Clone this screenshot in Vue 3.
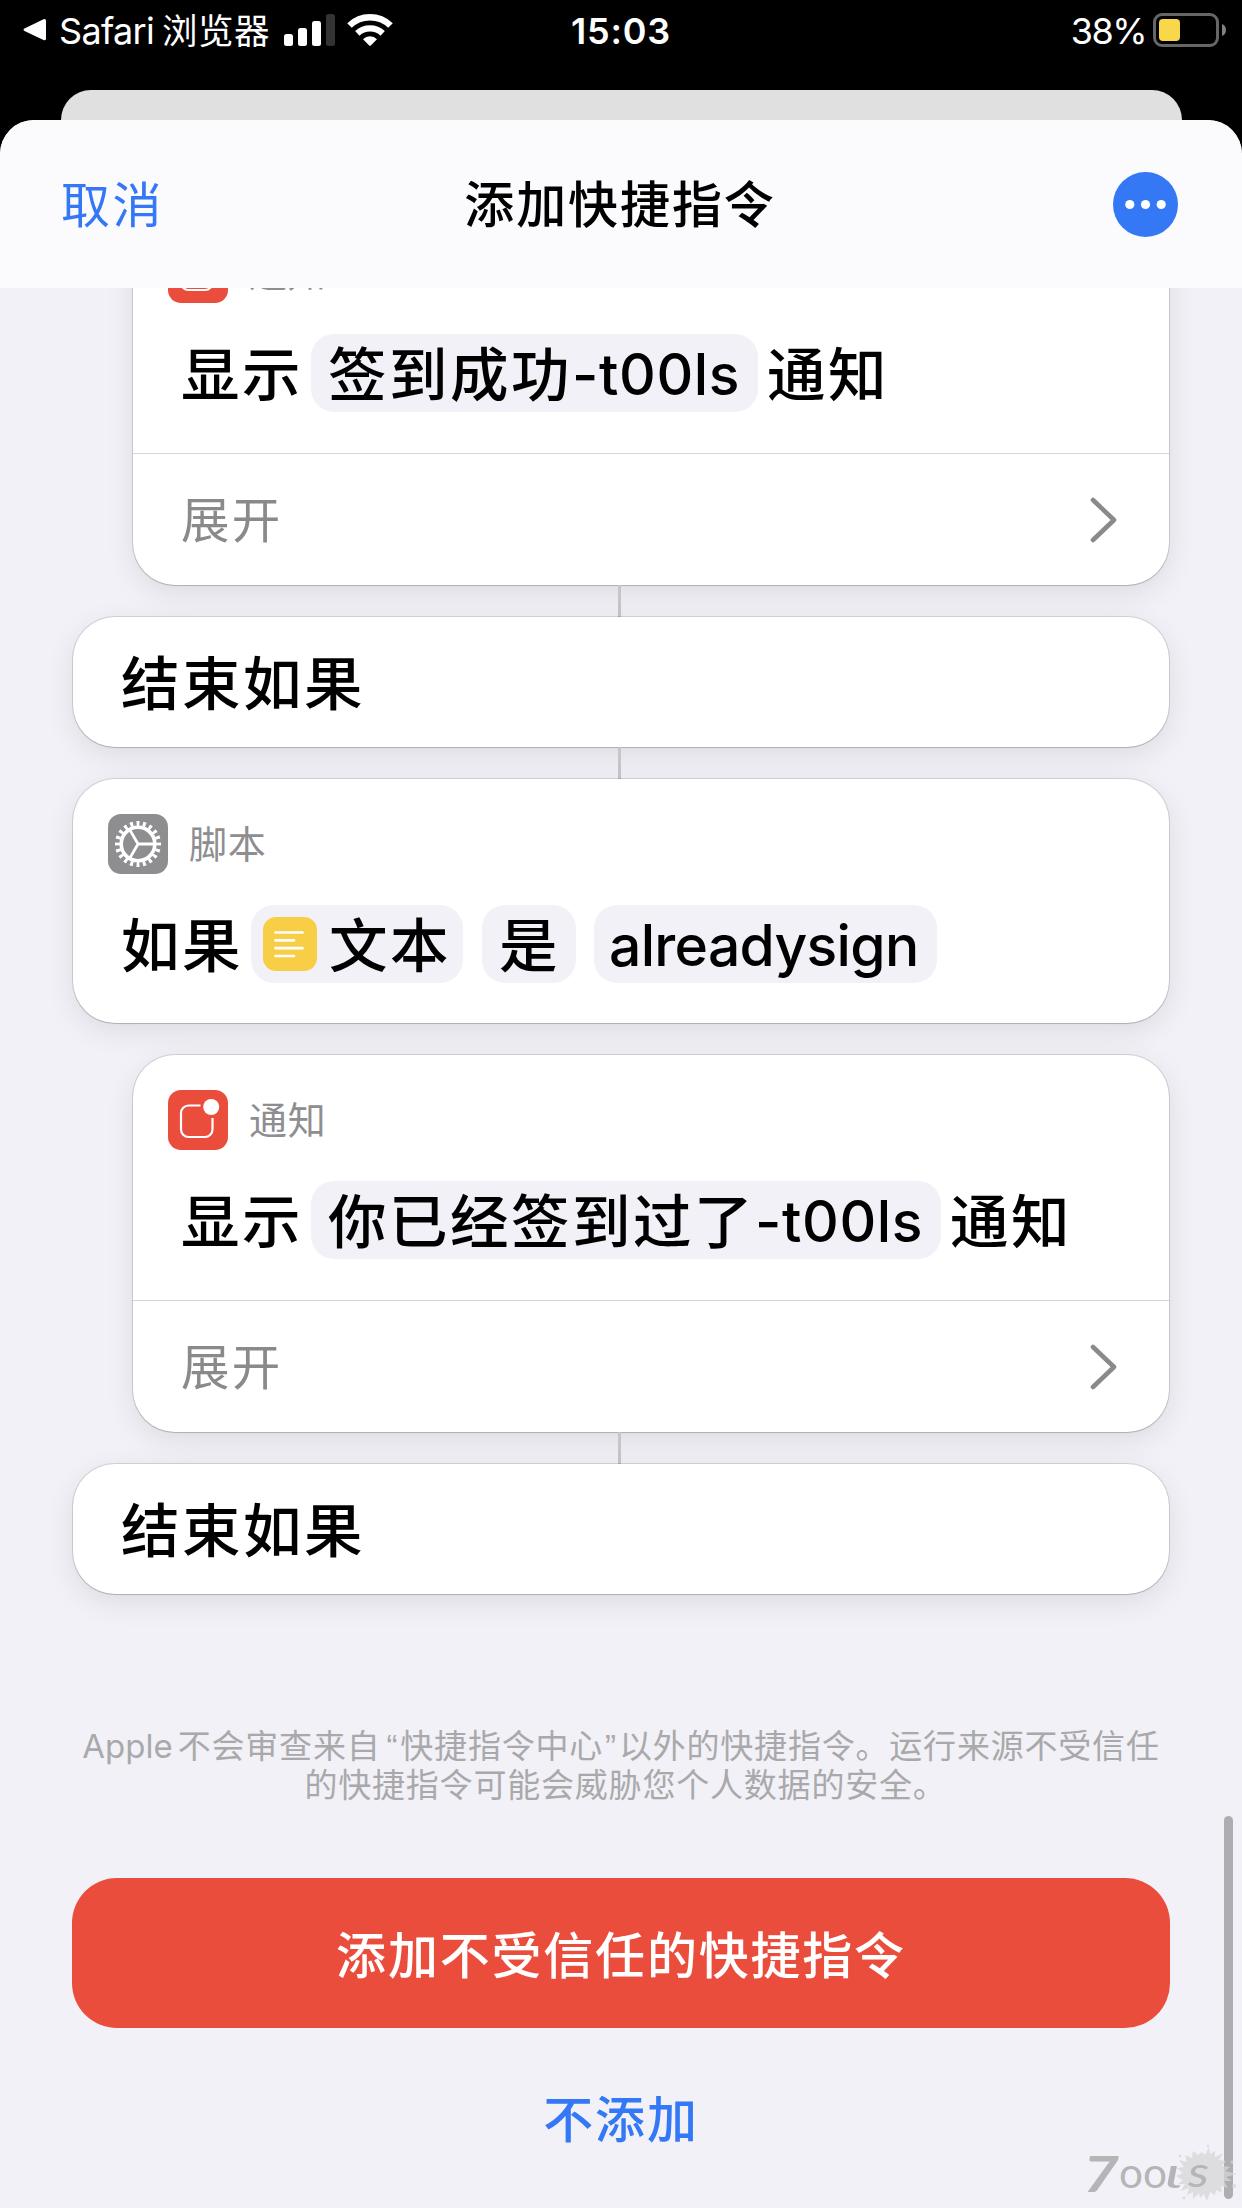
<script setup>
const actions = [
  { id: 1, kind: 'notify', indent: true, linked: true, message: '签到成功', suffix: '-t00ls' },
  { id: 2, kind: 'end', indent: false, linked: true },
  { id: 3, kind: 'if', indent: false, linked: false },
  { id: 4, kind: 'notify', indent: true, linked: true, message: '你已经签到过了', suffix: '-t00ls' },
  { id: 5, kind: 'end', indent: false, linked: false },
]
</script>

<template>
  <div class="screen">
    <header class="status">
      <div class="status__left">
        <svg class="status__back" width="24" height="24" viewBox="0 0 24 24">
          <path d="M1.5 10.6 20.5 1.3Q23 .5 23 3V20.500Q23 23 20.500 22L1.500 13Q-.5 11.800 1.500 10.600Z" fill="#fff" />
        </svg>
        <span class="status__app">Safari</span>
        <span class="status__app-cn">浏览器</span>
        <svg class="status__signal" width="52" height="33" viewBox="0 0 52 33">
          <rect x="0" y="20" width="9" height="12" rx="2.500" fill="#fff" />
          <rect x="14" y="14" width="9" height="18" rx="2.500" fill="#fff" />
          <rect x="28" y="7" width="9" height="25" rx="2.500" fill="#fff" />
          <rect x="42" y="0" width="9" height="32" rx="2.500" fill="#333" />
        </svg>
        <svg class="status__wifi" width="46" height="34" viewBox="0 0 46 34">
          <path d="M2.500 12.500A29.500 29.500 0 0 1 43.500 12.500" fill="none" stroke="#fff" stroke-width="6.500" />
          <path d="M10.300 20.400A18.500 18.500 0 0 1 35.700 20.400" fill="none" stroke="#fff" stroke-width="6.300" />
          <path d="M16 26.200A10 10 0 0 1 30 26.200L23.800 32.500Q23 33.200 22.200 32.500Z" fill="#fff" />
        </svg>
      </div>
      <span class="status__time">15:03</span>
      <div class="status__right">
        <span class="status__percent">38%</span>
        <svg width="74" height="34" viewBox="0 0 74 34">
          <rect x="1.500" y="1.500" width="63" height="31" rx="7.500" fill="none" stroke="#666" stroke-width="3" />
          <rect x="6" y="6" width="21" height="22" rx="4" fill="#f8d74a" />
          <path d="M69 11Q73 12.500 73 17T69 23Z" fill="#808080" />
        </svg>
      </div>
    </header>

    <div class="back-sheet"></div>

    <main class="sheet">
      <nav class="nav">
        <span class="nav__cancel">取消</span>
        <h1 class="nav__title">添加快捷指令</h1>
        <svg class="nav__more" width="65" height="65" viewBox="0 0 65 65">
          <circle cx="32.500" cy="32.500" r="32.500" fill="#3478f6" />
          <circle cx="16.800" cy="32.500" r="4.600" fill="#fff" />
          <circle cx="32.500" cy="32.500" r="4.600" fill="#fff" />
          <circle cx="48.200" cy="32.500" r="4.600" fill="#fff" />
        </svg>
      </nav>

      <div class="scroll">
        <div class="actions">
          <section
            v-for="action in actions"
            :key="action.id"
            class="card"
            :class="{ 'card--indent': action.indent, 'card--linked': action.linked }"
          >
            <template v-if="action.kind === 'notify'">
              <div class="card__head">
                <svg width="60" height="60" viewBox="0 0 60 60">
                  <rect width="60" height="60" rx="13" fill="#eb4d3d" />
                  <path
                    d="M32.500 15.500H20.500a7.500 7.500 0 0 0-7.500 7.500V39.500a7.500 7.500 0 0 0 7.500 7.500H37a7.500 7.500 0 0 0 7.500-7.500V28"
                    fill="none"
                    stroke="#fff"
                    stroke-width="2.200"
                  />
                  <circle cx="43.200" cy="17" r="8" fill="#fff" />
                </svg>
                <span class="card__label">通知</span>
              </div>
              <div class="card__line">
                <span>显示</span>
                <span class="chip chip--message">
                  <span>{{ action.message }}</span>
                  <span class="chip__latin">{{ action.suffix }}</span>
                </span>
                <span>通知</span>
              </div>
              <div class="card__expand">
                <span class="card__expand-text">展开</span>
                <svg width="28" height="46" viewBox="0 0 28 46">
                  <path
                    d="M3 3 24 23 3 43"
                    fill="none"
                    stroke="#8a8a8d"
                    stroke-width="4.600"
                    stroke-linecap="round"
                    stroke-linejoin="round"
                  />
                </svg>
              </div>
            </template>

            <template v-else-if="action.kind === 'if'">
              <div class="card__head">
                <svg width="60" height="60" viewBox="0 0 60 60">
                  <rect width="60" height="60" rx="13" fill="#8e8e91" />
                  <g fill="none" stroke="#fff">
                    <circle cx="30" cy="30" r="16.800" stroke-width="3.600" />
                    <circle cx="30" cy="30" r="20.500" stroke-width="5" pathLength="200" stroke-dasharray="4.600 5.400" stroke-dashoffset="2.300" />
                    <path d="M30 30H46M30 30 22 16.100M30 30 22 43.900" stroke-width="2.800" />
                  </g>
                </svg>
                <span class="card__label">脚本</span>
              </div>
              <div class="card__line card__line--if">
                <span>如果</span>
                <span class="chip chip--variable">
                  <svg width="54" height="54" viewBox="0 0 54 54">
                    <rect width="54" height="54" rx="13" fill="#f8ce46" />
                    <path
                      d="M12.500 15.500H39.500M12.500 23.300H31M12.500 31.200H39.500M12.500 39H31"
                      stroke="#fff"
                      stroke-width="2.700"
                      stroke-linecap="round"
                    />
                  </svg>
                  <span>文本</span>
                </span>
                <span class="chip chip--operator"><span>是</span></span>
                <span class="chip chip--value"><span>alreadysign</span></span>
              </div>
            </template>

            <div v-else class="card__end">结束如果</div>
          </section>
        </div>

        <p class="notice">
          <span class="notice__latin">Apple</span>不会审查来自<span class="notice__quote notice__quote--open">“</span>快捷指令中心<span class="notice__quote">”</span>以外的快捷指令。运行来源不受信任<br /><span class="notice__last">的快捷指令可能会威胁您个人数据的安全。</span>
        </p>

        <button type="button" class="add">添加不受信任的快捷指令</button>
        <button type="button" class="skip">不添加</button>
      </div>

      <div class="scrollbar"></div>

      <svg class="watermark" width="170" height="70" viewBox="0 0 170 70">
        <g fill="#d5d5d8" fill-opacity="0.75">
          <path
            d="M130 14 133 17 137 9 138 16 143 13 143 19 151 15 147 22 154 23 150 28 158 29 153 33 165 36 154 39 160 43 152 43 156 50 149 48 150 55 144 52 143 57 138 54 135 63 132 56 128 60 127 55 121 61 121 54 115 57 117 50 109 53 113 46 106 46 111 42 104 38 111 35 105 30 112 29 107 22 115 24 113 17 120 20 121 13 126 17Z"
          />
          <circle cx="108" cy="18" r="1.500" />
          <circle cx="160" cy="24" r="1.500" />
          <circle cx="162" cy="48" r="2" />
          <circle cx="112" cy="60" r="1.500" />
          <circle cx="136" cy="8" r="1.200" />
        </g>
        <g fill="#b5b5b8">
          <text class="watermark__seven" x="11" y="54" textLength="36" lengthAdjust="spacingAndGlyphs">7</text>
          <text class="watermark__letters" x="47" y="50" textLength="48" lengthAdjust="spacingAndGlyphs">oo</text>
          <text class="watermark__letters watermark__letters--slanted" x="93" y="50" textLength="17" lengthAdjust="spacingAndGlyphs">ι</text>
          <text class="watermark__letters watermark__letters--slanted" x="116" y="49" textLength="21" lengthAdjust="spacingAndGlyphs">s</text>
        </g>
      </svg>
    </main>
  </div>
</template>

<style>
body {
  margin: 0;
  background: #000;
}
</style>

<style scoped>
.screen {
  position: relative;
  display: flex;
  flex-direction: column;
  width: 1242px;
  height: 2208px;
  overflow: hidden;
  background: #000;
  font-family: Inter, 'Noto Sans CJK SC', sans-serif;
}

.status {
  display: grid;
  grid-template-columns: 1fr auto 1fr;
  align-items: start;
  height: 90px;
  color: #fff;
  font-size: 36px;
  line-height: 60px;
}

.status__left,
.status__right {
  display: flex;
  height: 60px;
  align-items: center;
}

.status__left {
  padding-left: 23px;
}

.status__app {
  width: 103px;
  margin-left: 12px;
  padding-top: 2px;
  letter-spacing: -0.700px;
}

.status__app-cn {
  width: 120px;
  padding-top: 4px;
  font-size: 35.500px;
  letter-spacing: 0.500px;
}

.status__signal {
  margin-left: 2px;
}

.status__wifi {
  margin-left: 11px;
}

.status__time {
  padding-top: 1px;
  font-weight: 600;
  letter-spacing: 0.800px;
}

.status__right {
  justify-content: flex-end;
  gap: 7px;
  padding-right: 15px;
}

.status__percent {
  padding-top: 2px;
  letter-spacing: -1.500px;
}

.back-sheet {
  flex: none;
  height: 30px;
  margin: 0 60px 0 61px;
  background: #e0e0e0;
  border-radius: 30px 30px 0 0;
}

.sheet {
  position: relative;
  display: flex;
  flex: 1;
  flex-direction: column;
  min-height: 0;
  overflow: hidden;
  background: #f2f1f7;
  border-radius: 34px 34px 0 0;
}

.nav {
  display: grid;
  flex: none;
  grid-template-columns: 1fr auto 1fr;
  align-items: center;
  height: 168px;
  padding: 0 64px 0 60px;
  background: #fbfbfd;
  font-size: 50px;
}

.nav__cancel {
  padding: 0 0 6px 1px;
  font-size: 49px;
  color: #3478f6;
  letter-spacing: 2.500px;
}

.nav__title {
  margin: 0;
  padding: 0 0 6px 2px;
  font-size: 50px;
  font-weight: 500;
  letter-spacing: 1.900px;
}

.nav__more {
  justify-self: end;
}

.scroll {
  display: flex;
  flex: 1;
  flex-direction: column;
  min-height: 0;
  padding: 0 73px;
  overflow: hidden;
}

.actions {
  display: flex;
  flex-direction: column;
  gap: 32px;
  margin-top: -80px;
}

.card {
  position: relative;
  background: #fff;
  border-radius: 42px;
  box-shadow:
    0 0 0 1px rgba(0, 0, 0, 0.12),
    0 1px 1px rgba(0, 0, 0, 0.12),
    0 8px 30px rgba(0, 0, 0, 0.09);
}

.card--indent {
  margin-left: 60px;
}

/* connector down to the next action */
.card--linked::after {
  position: absolute;
  top: 100%;
  right: 548px;
  width: 3px;
  height: 32px;
  content: '';
  background: #c6c6c8;
}

.card__head {
  display: flex;
  gap: 21px;
  align-items: center;
  padding: 35px 35px 0;
}

.card__label {
  font-size: 38px;
  line-height: 60px;
  color: #8e8e91;
  letter-spacing: 0.700px;
}

.card__line {
  display: flex;
  align-items: center;
  height: 78px;
  padding: 31px 0 41px 48px;
  font-size: 58.500px;
  font-weight: 500;
  line-height: 78px;
  letter-spacing: 2.500px;
  white-space: nowrap;
}

.card__line--if {
  padding-bottom: 40px;
}

.card__line span:not(.chip) {
  padding-top: 4px;
}

.chip {
  display: flex;
  align-items: center;
  box-sizing: border-box;
  height: 78px;
  background: #f2f1f7;
  border-radius: 23px;
}

.chip--message {
  margin: 0 9px 0 8px;
  padding: 0 18px 0 17px;
}

.chip__latin {
  font-size: 57px;
  letter-spacing: 0.600px;
}

.chip--variable {
  gap: 12px;
  width: 212px;
  margin-left: 8px;
  padding-left: 12px;
}

.chip--operator {
  width: 94px;
  margin-left: 19px;
  padding-left: 17px;
}

.chip--value {
  width: 343px;
  margin-left: 18px;
  padding-left: 15px;
  font-size: 57px;
  letter-spacing: -0.700px;
}

.card__expand {
  display: flex;
  align-items: center;
  justify-content: space-between;
  height: 131px;
  padding: 0 51px 0 48px;
  font-size: 48.500px;
  color: #8a8a8d;
  letter-spacing: 2.300px;
  border-top: 1px solid #d6d6d8;
}

.card__expand-text {
  padding-bottom: 5px;
}

.card__end {
  height: 130px;
  padding-left: 48px;
  font-size: 58.500px;
  font-weight: 500;
  line-height: 134px;
  letter-spacing: 2.500px;
}

.notice {
  margin: 133px -20px 0;
  font-size: 33px;
  line-height: 39px;
  color: #a9a9ab;
  text-align: center;
  letter-spacing: 0.800px;
  white-space: nowrap;
}

.notice__latin {
  margin-right: 5px;
  letter-spacing: 0;
}

.notice__quote {
  margin: 0 2px;
  font-family: 'Liberation Sans', sans-serif;
}

.notice__quote--open {
  margin-left: 6px;
}

.notice__last {
  padding-left: 9px;
}

.add {
  height: 150px;
  margin: 73px -1px 0;
  padding: 0 0 3px;
  font: inherit;
  font-size: 50px;
  font-weight: 500;
  color: #fff;
  letter-spacing: 1.800px;
  background: #eb4d3d;
  border: 0;
  border-radius: 45px;
}

.skip {
  align-self: center;
  margin-top: 55px;
  padding: 0;
  font: inherit;
  font-size: 50px;
  font-weight: 500;
  line-height: 74px;
  color: #3478f6;
  letter-spacing: 1.800px;
  background: none;
  border: 0;
}

.scrollbar {
  position: absolute;
  right: 9px;
  bottom: 9px;
  width: 9px;
  height: 383px;
  background: #aeaeb2;
  border-radius: 5px;
}

.watermark {
  position: absolute;
  right: 0;
  bottom: 0;
}

.watermark__seven {
  font: italic 700 50px Lato, sans-serif;
}

.watermark__letters {
  font: 400 42px Lato, sans-serif;
}

.watermark__letters--slanted {
  font-style: italic;
}
</style>
